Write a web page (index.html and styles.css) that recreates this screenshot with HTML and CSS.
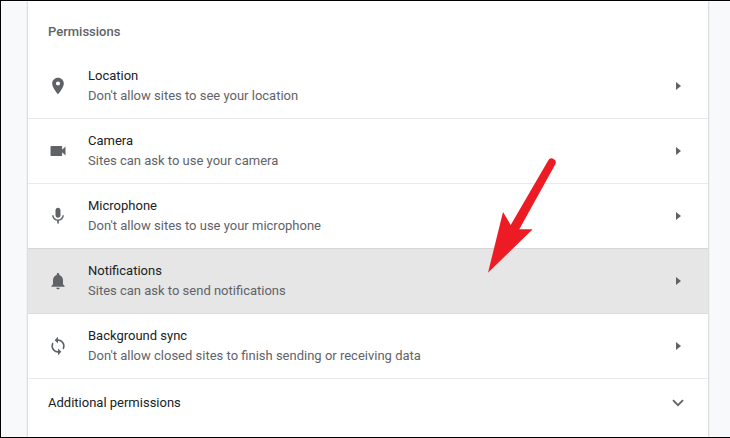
FILE: index.html
```html
<!DOCTYPE html>
<html lang="en">
<head>
  <meta charset="UTF-8" />
  <title>Permissions</title>
  <link rel="stylesheet" href="styles.css">
</head>
<body>
  <div class="frame">
    <div class="card">
      <div class="heading">Permissions</div>

      <div class="row">
        <svg class="icon" viewBox="0 0 24 24"><path d="M12 2C8.13 2 5 5.13 5 9c0 5.25 7 13 7 13s7-7.75 7-13c0-3.87-3.13-7-7-7zm0 9.5a2.5 2.5 0 0 1 0-5 2.5 2.5 0 0 1 0 5z"/></svg>
        <div class="text">
          <div class="name">Location</div>
          <div class="desc">Don't allow sites to see your location</div>
        </div>
        <div class="caret"></div>
      </div>

      <div class="row">
        <svg class="icon" viewBox="0 0 24 24"><path d="M17 10.5V7c0-.55-.45-1-1-1H4c-.55 0-1 .45-1 1v10c0 .55.45 1 1 1h12c.55 0 1-.45 1-1v-3.5l4 4v-11l-4 4z"/></svg>
        <div class="text">
          <div class="name">Camera</div>
          <div class="desc">Sites can ask to use your camera</div>
        </div>
        <div class="caret"></div>
      </div>

      <div class="row">
        <svg class="icon" viewBox="0 0 24 24"><path d="M12 14c1.66 0 2.99-1.34 2.99-3L15 5c0-1.66-1.34-3-3-3S9 3.34 9 5v6c0 1.66 1.34 3 3 3zm5.3-3c0 3-2.54 5.1-5.3 5.1S6.7 14 6.7 11H5c0 3.41 2.72 6.23 6 6.72V21h2v-3.28c3.28-.48 6-3.3 6-6.72h-1.7z"/></svg>
        <div class="text">
          <div class="name">Microphone</div>
          <div class="desc">Don't allow sites to use your microphone</div>
        </div>
        <div class="caret"></div>
      </div>

      <div class="row hovered">
        <svg class="icon" viewBox="0 0 24 24"><path d="M12 22c1.1 0 2-.9 2-2h-4c0 1.1.89 2 2 2zm6-6v-5c0-3.07-1.64-5.64-4.5-6.32V4c0-.83-.67-1.5-1.5-1.5s-1.5.67-1.5 1.5v.68C7.63 5.36 6 7.92 6 11v5l-2 2v1h16v-1l-2-2z"/></svg>
        <div class="text">
          <div class="name">Notifications</div>
          <div class="desc">Sites can ask to send notifications</div>
        </div>
        <div class="caret"></div>
      </div>

      <div class="row">
        <svg class="icon" viewBox="0 0 24 24"><path d="M12 4V1L8 5l4 4V6c3.31 0 6 2.69 6 6 0 1.01-.25 1.97-.7 2.8l1.46 1.46C19.54 15.03 20 13.57 20 12c0-4.42-3.58-8-8-8zm0 14c-3.31 0-6-2.69-6-6 0-1.01.25-1.97.7-2.8L5.24 7.74C4.46 8.97 4 10.43 4 12c0 4.42 3.58 8 8 8v3l4-4-4-4v3z"/></svg>
        <div class="text">
          <div class="name">Background sync</div>
          <div class="desc">Don't allow closed sites to finish sending or receiving data</div>
        </div>
        <div class="caret"></div>
      </div>

      <div class="more">
        <div class="name">Additional permissions</div>
        <svg class="chevron" viewBox="0 0 12 8"><path d="M1 1.2l5 5 5-5"/></svg>
      </div>
    </div>

    <!-- red annotation arrow -->
    <svg class="arrow" viewBox="0 0 730 438"><path d="M548.2 160.6a4 4 0 0 1 7 3.9L519.3 229.3H532.7L488 272.7L503 212L510.7 225Z"/></svg>
  </div>
</body>
</html>
```

FILE: styles.css
```css
html, body {
  margin: 0;
  height: 100%;
}

body {
  overflow: hidden;
  font-family: Roboto, "Liberation Sans", sans-serif;
}

.frame {
  position: relative;
  box-sizing: border-box;
  width: 730px;
  height: 438px;
  padding-left: 27px;
  background: #f8f9fa;
  border-top: 1px solid #000;
  border-left: 1px solid #000;
  border-bottom: 1px solid #000;
  overflow: hidden;
}

.card {
  width: 680px;
  height: 100%;
  background: #fff;
  box-shadow: 0 0 2px rgba(60, 64, 67, 0.45);
}

.heading {
  height: 53px;
  padding: 22px 0 0 20px;
  box-sizing: border-box;
  font-size: 13px;
  line-height: 17px;
  font-weight: 500;
  color: #5f6368;
}

.row {
  display: flex;
  align-items: center;
  box-sizing: border-box;
  height: 65px;
  padding-left: 20px;
  border-bottom: 1px solid #e9eaeb;
}

.row.hovered {
  background: #e6e6e6;
  border-top: 1px solid #d6d6d6;
  border-bottom-color: #dcdcdc;
  margin-top: -1px;
  height: 66px;
}

.icon {
  width: 20px;
  height: 20px;
  margin-right: 20px;
  fill: #5f6368;
  flex: none;
}

.text {
  flex: 1;
}

.name {
  font-size: 13px;
  line-height: 20px;
  color: #202124;
}

.desc {
  font-size: 13px;
  line-height: 20px;
  color: #5f6368;
}

.caret {
  width: 0;
  height: 0;
  margin-right: 27px;
  border-left: 5px solid #5f6368;
  border-top: 4.5px solid transparent;
  border-bottom: 4.5px solid transparent;
}

.more {
  display: flex;
  align-items: center;
  justify-content: space-between;
  height: 48px;
  padding: 0 24px 0 20px;
}

.chevron {
  width: 12px;
  height: 8px;
  fill: none;
  stroke: #5f6368;
  stroke-width: 1.8;
}

.arrow {
  position: absolute;
  left: -1px;
  top: -1px;
  width: 730px;
  height: 438px;
  fill: #ed1c24;
}
```
